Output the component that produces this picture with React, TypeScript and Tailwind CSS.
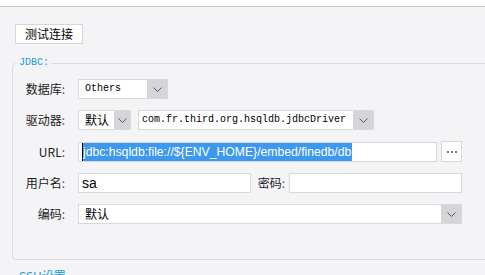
import type { ReactNode } from "react";

const cjk = "font-['Noto_Sans_CJK_SC',sans-serif]";
const mono = "font-['Liberation_Mono','Noto_Sans_CJK_SC',monospace]";

function Chevron() {
  return (
    <svg width="9" height="5" viewBox="0 0 9 5" fill="none">
      <path d="M0.5 0.5 L4.5 4.5 L8.5 0.5" stroke="#5a5a5a" strokeWidth="1" />
    </svg>
  );
}

function Label({ children, className = "w-[52px]" }: { children: ReactNode; className?: string }) {
  return (
    <span className={`${cjk} ${className} shrink-0 text-right text-[12px] leading-[20px] text-[#1a1a1a]`}>
      {children}
      <span className="text-[#6a4a6a]">:</span>
    </span>
  );
}

function Select({
  value,
  width,
  arrow = "w-[20px]",
  font = mono,
  textSize = "text-[10px]",
  pad = "pl-[6px]",
}: {
  value: string;
  width: string;
  arrow?: string;
  font?: string;
  textSize?: string;
  pad?: string;
}) {
  return (
    <div className={`${width} flex h-[20px] shrink-0 border border-[#d9d9dc] bg-white`}>
      <span className={`${font} ${textSize} ${pad} flex-1 truncate leading-[18px] text-black`}>
        {value}
      </span>
      <span className={`${arrow} flex items-center justify-center bg-[#d5d5d9]`}>
        <Chevron />
      </span>
    </div>
  );
}

export default function App() {
  return (
    <div className="h-[275px] w-[485px] overflow-hidden bg-[#f4f4f6]">
      <div className="h-[7px] border-b border-[#c9c9cb] bg-white" />

      <button
        className={`${cjk} ml-[15px] mt-[17px] flex h-[20px] w-[68px] items-center justify-center border border-[#d6d6d8] bg-white text-[12px] leading-none text-black`}
      >
        测试连接
      </button>

      <fieldset className="mt-[12px] ml-[12px] w-[490px] rounded-[4px] border border-[#dcdcdf] pb-[35px] pt-[9px]">
        <legend className={`${mono} ml-[4px] px-[2px] text-[10px] leading-[14px] text-[#1a9bd8]`}>
          JDBC:
        </legend>
        <div className="flex flex-col gap-[11px]">
          <div className="flex items-center gap-[13px]">
            <Label>数据库</Label>
            <Select value="Others" width="w-[90px]" />
          </div>

          <div className="flex items-center gap-[13px]">
            <Label>驱动器</Label>
            <div className="flex items-center gap-[7px]">
              <Select value="默认" width="w-[53px]" arrow="w-[16px]" font={cjk} textSize="text-[12px]" />
              <Select value="com.fr.third.org.hsqldb.jdbcDriver" width="w-[236px]" pad="pl-[3px]" />
            </div>
          </div>

          <div className="flex items-center gap-[13px]">
            <Label>URL</Label>
            <div className="flex items-center gap-[4px]">
              <div className="flex h-[20px] w-[359px] items-center border border-[#d9d9dc] bg-white pl-[3px]">
                <span className="flex h-[18px] items-center border-l border-black bg-[#3d98f0] pr-[1px] font-['Liberation_Sans',sans-serif] text-[12.2px] leading-[18px] text-white">
                  jdbc:hsqldb:file://${"{"}ENV_HOME{"}"}/embed/finedb/db
                </span>
              </div>
              <button className="flex h-[21px] w-[21px] items-center justify-center gap-[2px] border border-[#d9d9dc] bg-white">
                <span className="h-[2px] w-[2px] bg-[#777]" />
                <span className="h-[2px] w-[2px] bg-[#777]" />
                <span className="h-[2px] w-[2px] bg-[#777]" />
              </button>
            </div>
          </div>

          <div className="flex items-center gap-[13px]">
            <Label>用户名</Label>
            <div className="flex items-center">
              <div className="h-[20px] w-[173px] border border-[#d9d9dc] bg-white pl-[3px] font-['Liberation_Sans',sans-serif] text-[14px] leading-[18px] text-black">
                sa
              </div>
              <Label className="w-[34px]">密码</Label>
              <div className="ml-[4px] h-[20px] w-[173px] border border-[#d9d9dc] bg-white" />
            </div>
          </div>

          <div className="flex items-center gap-[13px]">
            <Label>编码</Label>
            <Select value="默认" width="w-[384px]" font={cjk} textSize="text-[12px]" />
          </div>
        </div>
      </fieldset>

      <fieldset className="mt-[8px] ml-[12px] w-[490px] rounded-[4px] border border-[#dcdcdf] pb-[20px]">
        <legend className={`${cjk} ml-[4px] px-[2px] text-[12px] leading-[16px] text-[#1a9bd8]`}>
          SSH设置
        </legend>
      </fieldset>
    </div>
  );
}
